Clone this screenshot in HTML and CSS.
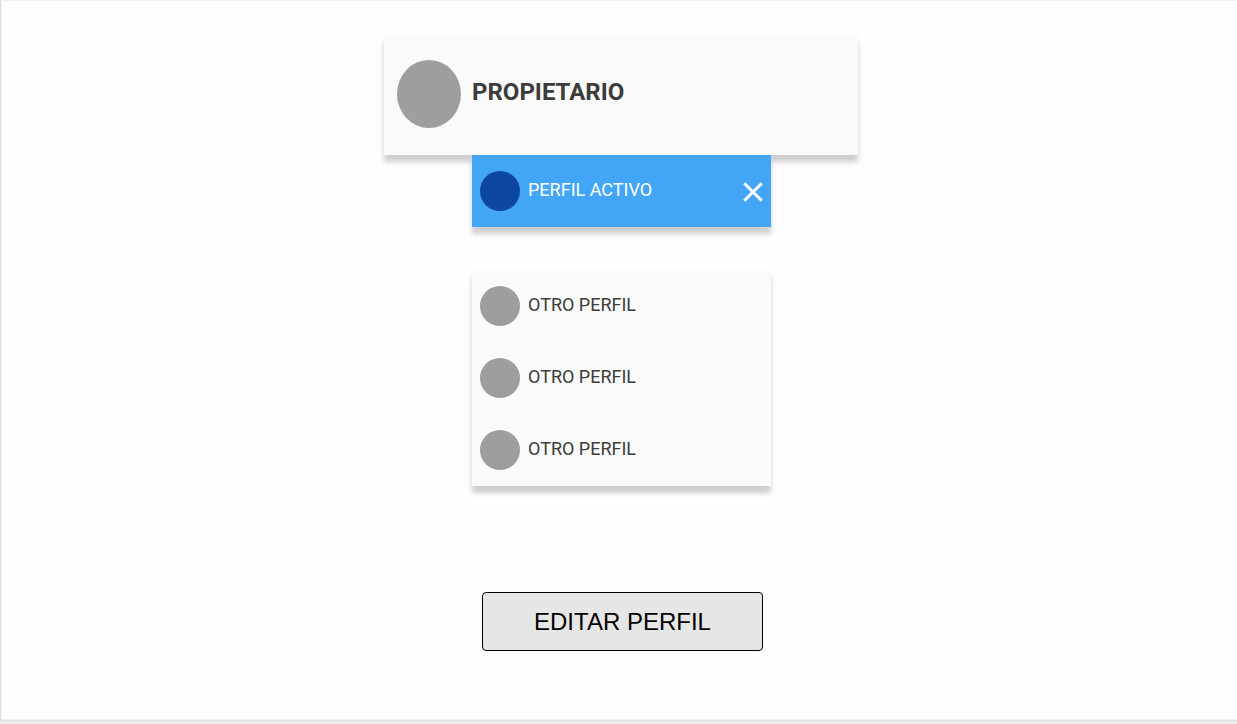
FILE: index.html
```html
<!DOCTYPE html>
<html lang="es">
<head>
<meta charset="utf-8">
<meta name="viewport" content="width=device-width, initial-scale=1">
<title>Perfiles</title>
<link rel="stylesheet" href="styles.css">
</head>
<body>
<main class="page">
  <div class="account">
    <header class="owner">
      <span class="owner-avatar"></span>
      <h1 class="owner-name">PROPIETARIO</h1>
    </header>
    <div class="profiles">
      <div class="profile profile-active">
        <span class="avatar avatar-active"></span>
        <span class="profile-name">PERFIL ACTIVO</span>
        <button class="close" type="button" aria-label="Cerrar">
          <svg class="close-icon" viewBox="0 0 20 20" aria-hidden="true"><path d="M1.2 1.2L18.8 18.8M18.8 1.2L1.2 18.8" fill="none" stroke="#fff" stroke-width="3"/></svg>
        </button>
      </div>
      <ul class="profile-list">
        <li class="profile"><span class="avatar"></span><span class="profile-name">OTRO PERFIL</span></li>
        <li class="profile"><span class="avatar"></span><span class="profile-name">OTRO PERFIL</span></li>
        <li class="profile"><span class="avatar"></span><span class="profile-name">OTRO PERFIL</span></li>
      </ul>
      <button class="edit" type="button">EDITAR PERFIL</button>
    </div>
  </div>
</main>
</body>
</html>
```
FILE: styles.css
```css
* {
  box-sizing: border-box;
}

body {
  margin: 0;
  min-height: 100vh;
  display: flex;
  flex-direction: column;
  padding-bottom: 3px;
  background: #ececec;
  color: #3c3c3c;
  font-family: Roboto, "Liberation Sans", sans-serif;
}

.page {
  flex: 1;
  display: flex;
  justify-content: center;
  align-items: flex-start;
  padding: 33px 0 68px 4px;
  background: #fefefe;
  border: solid #e0e0e0;
  border-width: 1px 0 1px 1px;
  border-top-color: #f0f0f0;
  box-shadow: inset 1px -1px 0 #f0f0f0;
}

.account {
  width: 100%;
  max-width: 474px;
}

.owner {
  display: flex;
  align-items: flex-start;
  gap: 11px;
  padding: 26px 13px 27px;
  background: #fafafa;
  box-shadow: 0 7px 5px 0 rgba(0, 0, 0, 0.19);
}

.owner-avatar {
  flex: none;
  width: 64px;
  height: 68px;
  border-radius: 50%;
  background: #9e9e9e;
}

.owner-name {
  margin: 0;
  padding-top: 16px;
  font-size: 24px;
  line-height: 32px;
  font-weight: 700;
}

.profiles {
  display: flex;
  flex-direction: column;
  align-items: flex-start;
  width: 100%;
  max-width: 387px;
  padding-left: 88px;
}

.profile {
  display: flex;
  align-items: center;
  gap: 8px;
  width: 100%;
  height: 72px;
  padding: 0 8px;
}

.profile-active {
  position: relative;
  background: #42a5f5;
  color: #fff;
  box-shadow: 0 7px 5px 0 rgba(0, 0, 0, 0.19);
  clip-path: inset(0 -10px -20px -10px);
}

.avatar {
  flex: none;
  width: 40px;
  height: 40px;
  border-radius: 50%;
  background: #9e9e9e;
}

.avatar-active {
  background: #0d47a1;
}

.profile-name {
  flex: 1;
  padding-bottom: 2px;
  font-size: 18px;
  line-height: 24px;
}

.close {
  display: flex;
  padding: 2px 0 0;
  border: 0;
  background: none;
  cursor: pointer;
}

.close-icon {
  width: 20px;
  height: 20px;
}

.profile-list {
  width: 100%;
  margin: 43px 0 0;
  padding: 0;
  list-style: none;
  background: #fafafa;
  box-shadow: 0 7px 5px 0 rgba(0, 0, 0, 0.19);
}

.edit {
  width: 281px;
  max-width: 100%;
  height: 59px;
  margin: 106px 0 0 10px;
  border: 1px solid #000;
  border-radius: 4px;
  background: #e6e6e6;
  color: #000;
  font-family: "Liberation Sans", Arial, sans-serif;
  font-size: 24px;
  cursor: pointer;
}
```
